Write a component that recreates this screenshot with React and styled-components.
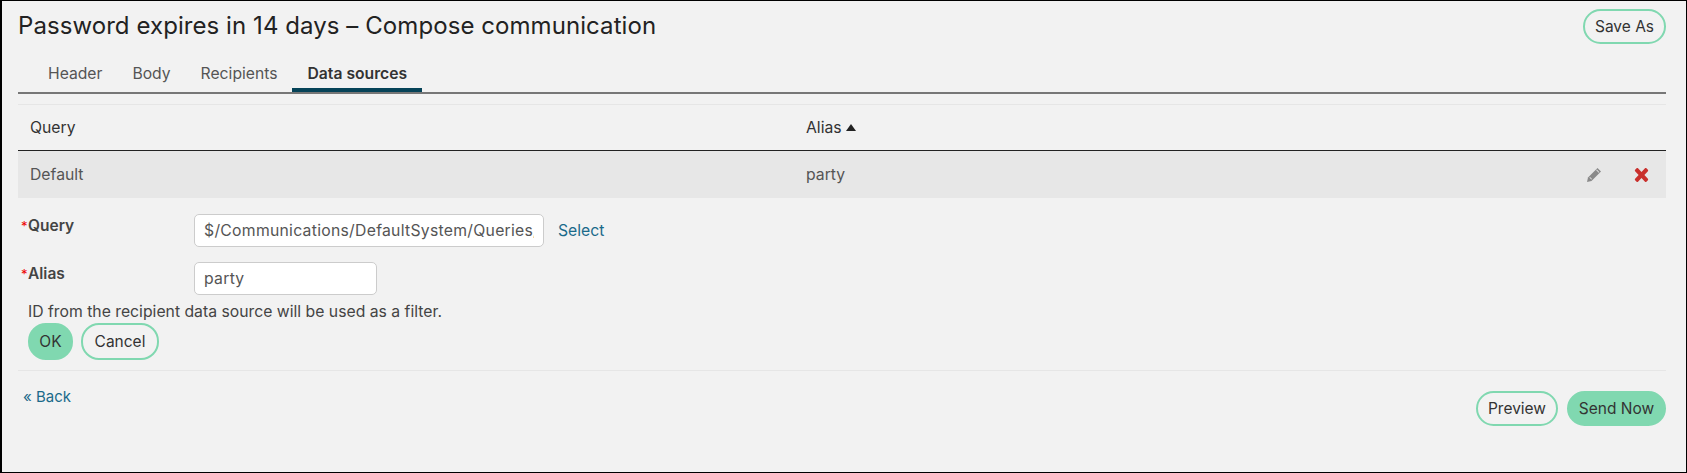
import React from "react";
import styled, { createGlobalStyle } from "styled-components";

const Global = createGlobalStyle`
  html, body { margin: 0; padding: 0; background: #f2f2f2; }
  body { font-family: Inter, "Liberation Sans", sans-serif; color: #333; }
`;

const Page = styled.div`
  box-sizing: border-box;
  width: 1687px;
  height: 473px;
  border: 1px solid #000;
  border-left-width: 2px;
  background: #f2f2f2;
  padding: 8px 20px 0 16px;
`;

const TitleBar = styled.div`
  display: flex;
  justify-content: space-between;
  align-items: flex-start;
  height: 53px;
`;

const Title = styled.h1`
  margin: 1px 0 0;
  font-size: 24px;
  line-height: 32px;
  font-weight: 400;
  color: #222;
  letter-spacing: 0.07px;
`;

const Tabs = styled.nav`
  display: flex;
  height: 30px;
  border-bottom: 2px solid #777;
`;

const Tab = styled.a`
  box-sizing: border-box;
  height: 30px;
  padding: 2px 15px 0;
  font-size: 15.7px;
  line-height: 20px;
  font-weight: ${(p) => (p.$active ? 600 : 400)};
  color: ${(p) => (p.$active ? "#333" : "#555")};
  border-bottom: 4px solid ${(p) => (p.$active ? "#064358" : "transparent")};

  &:first-child {
    padding-left: 30px;
  }
`;

const Table = styled.div`
  margin-top: 10px;
  border-top: 1px solid #e6e6e6;
`;

const Grid = styled.div`
  display: grid;
  grid-template-columns: 776px 1fr 98px;
  align-items: center;
  box-sizing: border-box;
  height: ${(p) => p.$h}px;
  background: ${(p) => p.$bg || "transparent"};
  border-bottom: ${(p) => (p.$line ? "1px solid #222" : "none")};
  font-size: 15.75px;
  color: ${(p) => p.$color || "#444"};
`;

const Cell = styled.div`
  padding-left: 12px;
  display: flex;
  align-items: center;
  gap: 4px;
`;

const Actions = styled.div`
  display: flex;
  align-items: center;
  gap: 32px;
  padding-left: 18px;
`;

const IconSvg = styled.svg`
  display: block;
  width: ${(p) => p.$w}px;
  height: ${(p) => p.$ht || 16}px;
`;

const Form = styled.div`
  padding-top: 16px;
`;

const FormRow = styled.div`
  display: flex;
  align-items: flex-start;
  height: ${(p) => p.$h}px;
`;

const Label = styled.label`
  width: 176px;
  padding: 2px 0 0 3px;
  box-sizing: border-box;
  font-size: 15.5px;
  line-height: 20px;
  font-weight: 600;
  color: #444;
  display: flex;
`;

const Star = styled.span`
  color: #e00;
  font-size: 13px;
  width: 7px;
  font-weight: 400;
`;

const Input = styled.input`
  box-sizing: border-box;
  width: ${(p) => p.$w}px;
  height: 33px;
  padding: 0 9px;
  border: 1px solid #ccc;
  border-radius: 5px;
  background: #fff;
  font: 400 15.75px Inter, "Liberation Sans", sans-serif;
  letter-spacing: 0.27px;
  color: #555;
  outline: none;
`;

const LinkText = styled.a`
  color: #1a6a8a;
  font-size: 15.75px;
  line-height: 33px;
  margin-left: 14px;
`;

const Help = styled.p`
  margin: 0;
  padding-left: 10px;
  font-size: 15.75px;
  line-height: 20px;
  color: #444;
`;

const ButtonRow = styled.div`
  display: flex;
  gap: 8px;
  padding-left: 10px;
  margin-top: 1px;
`;

const Pill = styled.button`
  box-sizing: border-box;
  height: ${(p) => p.$h || 35}px;
  width: ${(p) => p.$w}px;
  padding: 0;
  border: 2px solid #80d8b0;
  border-radius: 18px;
  background: ${(p) => (p.$solid ? "#80d8b0" : "transparent")};
  font: 400 15.5px Inter, "Liberation Sans", sans-serif;
  color: #333;
`;

const Divider = styled.div`
  margin-top: 10px;
  border-top: 1px solid #e6e6e6;
`;

const Footer = styled.div`
  display: flex;
  justify-content: space-between;
  align-items: flex-start;
  padding-top: 16px;
`;

const BackLink = styled.a`
  color: #1a6a8a;
  font-size: 15px;
  line-height: 20px;
  padding-left: 5px;
`;

const FooterButtons = styled.div`
  display: flex;
  gap: 9px;
  margin-top: 4px;
`;

const PencilIcon = () => (
  <IconSvg $w={16} viewBox="0 0 16 16">
    <path fill="#8a8a8a" d="M1 15l1-4.5L11.5 1 15 4.5 5.5 14z" />
    <path fill="#e7e7e7" d="M3.4 10.6l.6-.6 2 2-.6.6zM10.2 3.2l.6-.6 2.6 2.6-.6.6z" />
  </IconSvg>
);

const CrossIcon = () => (
  <IconSvg $w={15} viewBox="0 0 15 16">
    <path
      fill="#c9302c"
      d="M4 1.2L7.5 5 11 1.2c.4-.4 1-.4 1.4 0l1.5 1.6c.4.4.4 1 0 1.4L10.4 8l3.5 3.8c.4.4.4 1 0 1.4l-1.5 1.6c-.4.4-1 .4-1.4 0L7.5 11 4 14.8c-.4.4-1 .4-1.4 0L1.1 13.2c-.4-.4-.4-1 0-1.4L4.6 8 1.1 4.2c-.4-.4-.4-1 0-1.4l1.5-1.6c.4-.4 1-.4 1.4 0z"
    />
  </IconSvg>
);

const SortArrow = () => (
  <IconSvg $w={10} $ht={7} viewBox="0 0 10 7">
    <path fill="#222" d="M5 0l5 7H0z" />
  </IconSvg>
);

export default function App() {
  return (
    <>
      <Global />
      <Page>
        <TitleBar>
          <Title>Password expires in 14 days – Compose communication</Title>
          <Pill $w={83}>Save As</Pill>
        </TitleBar>
        <Tabs>
          <Tab>Header</Tab>
          <Tab>Body</Tab>
          <Tab>Recipients</Tab>
          <Tab $active>Data sources</Tab>
        </Tabs>
        <Table>
          <Grid $h={46} $line $color="#333">
            <Cell>Query</Cell>
            <Cell>
              Alias <SortArrow />
            </Cell>
            <span />
          </Grid>
          <Grid $h={47} $bg="#e7e7e7" $color="#555">
            <Cell>Default</Cell>
            <Cell>party</Cell>
            <Actions>
              <PencilIcon />
              <CrossIcon />
            </Actions>
          </Grid>
        </Table>
        <Form>
          <FormRow $h={48}>
            <Label>
              <Star>*</Star>Query
            </Label>
            <Input $w={350} readOnly value="$/Communications/DefaultSystem/Queries/Default" />
            <LinkText>Select</LinkText>
          </FormRow>
          <FormRow $h={40}>
            <Label>
              <Star>*</Star>Alias
            </Label>
            <Input $w={183} readOnly value="party" />
          </FormRow>
          <Help>ID from the recipient data source will be used as a filter.</Help>
          <ButtonRow>
            <Pill $solid $h={37} $w={45}>OK</Pill>
            <Pill $h={37} $w={78}>Cancel</Pill>
          </ButtonRow>
        </Form>
        <Divider />
        <Footer>
          <BackLink>« Back</BackLink>
          <FooterButtons>
            <Pill $w={82}>Preview</Pill>
            <Pill $solid $w={99}>Send Now</Pill>
          </FooterButtons>
        </Footer>
      </Page>
    </>
  );
}
